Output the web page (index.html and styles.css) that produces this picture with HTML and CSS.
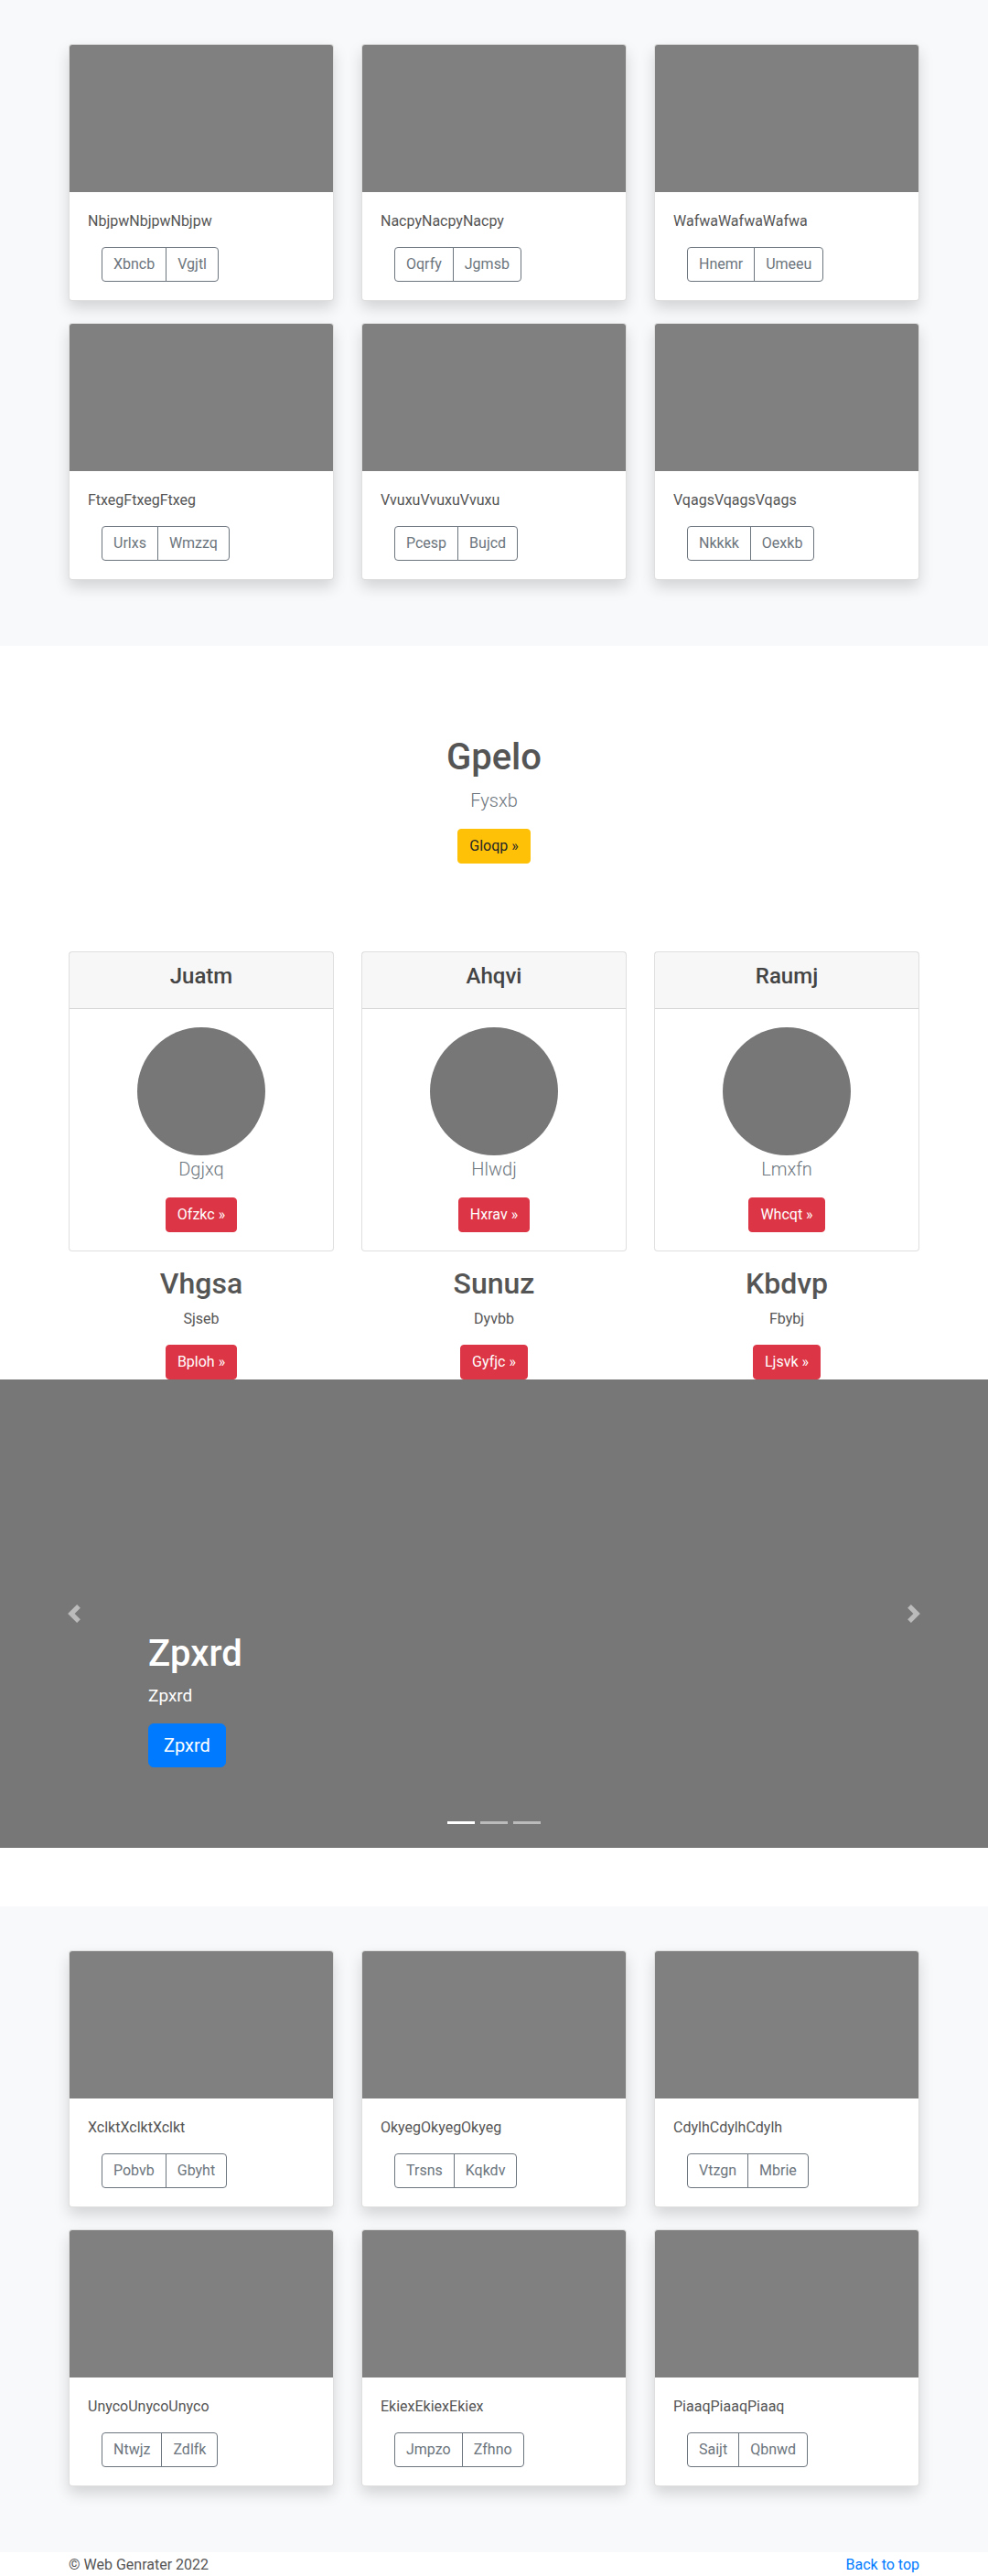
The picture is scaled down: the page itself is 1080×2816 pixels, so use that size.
FILE: index.html
```html
<!DOCTYPE html>
<html lang="en">
<head>
<meta charset="utf-8">
<title>Web Genrater</title>
<link rel="stylesheet" href="styles.css">
</head>
<body>
<section class="album">
  <div class="container grid3 album-grid">
    <div class="card"><div class="card-img"></div><div class="card-body"><p class="card-text">NbjpwNbjpwNbjpw</p><div class="btn-group"><a class="btn-o">Xbncb</a><a class="btn-o">Vgjtl</a></div></div></div>
    <div class="card"><div class="card-img"></div><div class="card-body"><p class="card-text">NacpyNacpyNacpy</p><div class="btn-group"><a class="btn-o">Oqrfy</a><a class="btn-o">Jgmsb</a></div></div></div>
    <div class="card"><div class="card-img"></div><div class="card-body"><p class="card-text">WafwaWafwaWafwa</p><div class="btn-group"><a class="btn-o">Hnemr</a><a class="btn-o">Umeeu</a></div></div></div>
    <div class="card"><div class="card-img"></div><div class="card-body"><p class="card-text">FtxegFtxegFtxeg</p><div class="btn-group"><a class="btn-o">Urlxs</a><a class="btn-o">Wmzzq</a></div></div></div>
    <div class="card"><div class="card-img"></div><div class="card-body"><p class="card-text">VvuxuVvuxuVvuxu</p><div class="btn-group"><a class="btn-o">Pcesp</a><a class="btn-o">Bujcd</a></div></div></div>
    <div class="card"><div class="card-img"></div><div class="card-body"><p class="card-text">VqagsVqagsVqags</p><div class="btn-group"><a class="btn-o">Nkkkk</a><a class="btn-o">Oexkb</a></div></div></div>
  </div>
</section>

<section class="jumbo">
  <h1 class="jumbo-title">Gpelo</h1>
  <p class="lead">Fysxb</p>
  <a class="btn btn-warning">Gloqp »</a>
</section>

<section class="container grid3">
  <div class="pcard">
    <div class="pcard-head"><h4 class="pcard-title">Juatm</h4></div>
    <div class="pcard-body"><div class="circle"></div><p class="lead pcard-lead">Dgjxq</p><a class="btn btn-danger">Ofzkc »</a></div>
  </div>
  <div class="pcard">
    <div class="pcard-head"><h4 class="pcard-title">Ahqvi</h4></div>
    <div class="pcard-body"><div class="circle"></div><p class="lead pcard-lead">Hlwdj</p><a class="btn btn-danger">Hxrav »</a></div>
  </div>
  <div class="pcard">
    <div class="pcard-head"><h4 class="pcard-title">Raumj</h4></div>
    <div class="pcard-body"><div class="circle"></div><p class="lead pcard-lead">Lmxfn</p><a class="btn btn-danger">Whcqt »</a></div>
  </div>
</section>

<section class="container grid3 features">
  <div class="feature"><h2 class="feature-title">Vhgsa</h2><p class="feature-text">Sjseb</p><a class="btn btn-danger">Bploh »</a></div>
  <div class="feature"><h2 class="feature-title">Sunuz</h2><p class="feature-text">Dyvbb</p><a class="btn btn-danger">Gyfjc »</a></div>
  <div class="feature"><h2 class="feature-title">Kbdvp</h2><p class="feature-text">Fbybj</p><a class="btn btn-danger">Ljsvk »</a></div>
</section>

<section class="carousel">
  <div class="carousel-caption">
    <h1 class="caption-title">Zpxrd</h1>
    <p class="caption-text">Zpxrd</p>
    <p class="caption-action"><a class="btn btn-lg btn-primary">Zpxrd</a></p>
  </div>
  <a class="ctrl ctrl-prev"><svg width="20" height="20" viewBox="0 0 8 8"><path fill="#fff" d="M5.25 0l-4 4 4 4 1.5-1.5L4.25 4l2.5-2.5L5.25 0z"/></svg></a>
  <a class="ctrl ctrl-next"><svg width="20" height="20" viewBox="0 0 8 8"><path fill="#fff" d="M2.75 0l-1.5 1.5L3.75 4l-2.5 2.5L2.75 8l4-4-4-4z"/></svg></a>
  <ol class="indicators"><li class="active"></li><li></li><li></li></ol>
</section>

<section class="album">
  <div class="container grid3 album-grid">
    <div class="card"><div class="card-img"></div><div class="card-body"><p class="card-text">XclktXclktXclkt</p><div class="btn-group"><a class="btn-o">Pobvb</a><a class="btn-o">Gbyht</a></div></div></div>
    <div class="card"><div class="card-img"></div><div class="card-body"><p class="card-text">OkyegOkyegOkyeg</p><div class="btn-group"><a class="btn-o">Trsns</a><a class="btn-o">Kqkdv</a></div></div></div>
    <div class="card"><div class="card-img"></div><div class="card-body"><p class="card-text">CdylhCdylhCdylh</p><div class="btn-group"><a class="btn-o">Vtzgn</a><a class="btn-o">Mbrie</a></div></div></div>
    <div class="card"><div class="card-img"></div><div class="card-body"><p class="card-text">UnycoUnycoUnyco</p><div class="btn-group"><a class="btn-o">Ntwjz</a><a class="btn-o">Zdlfk</a></div></div></div>
    <div class="card"><div class="card-img"></div><div class="card-body"><p class="card-text">EkiexEkiexEkiex</p><div class="btn-group"><a class="btn-o">Jmpzo</a><a class="btn-o">Zfhno</a></div></div></div>
    <div class="card"><div class="card-img"></div><div class="card-body"><p class="card-text">PiaaqPiaaqPiaaq</p><div class="btn-group"><a class="btn-o">Saijt</a><a class="btn-o">Qbnwd</a></div></div></div>
  </div>
</section>

<footer class="footer">
  <div class="container footer-row">
    <p class="footer-copy">© Web Genrater 2022</p>
    <a class="footer-link" href="#">Back to top</a>
  </div>
</footer>
</body>
</html>
```

FILE: styles.css
```css
* { box-sizing: border-box; }
html, body { margin: 0; padding: 0; }
body {
  font-family: Roboto, "Liberation Sans", Arial, sans-serif;
  font-size: 16px;
  line-height: 1.5;
  color: #555;
  background: #fff;
}
a { text-decoration: none; }

.container { width: 930px; margin: 0 auto; }
.grid3 { display: grid; grid-template-columns: repeat(3, 290px); column-gap: 30px; }

/* album sections */
.album { background: #f8f9fa; padding: 48px 0 72px; }
.album-grid { row-gap: 24px; }
.card {
  background: #fff;
  border: 1px solid rgba(0,0,0,.125);
  border-radius: 4px;
  box-shadow: 0 8px 16px rgba(0,0,0,.15);
  overflow: hidden;
}
.card-img { height: 161px; background: #808080; }
.card-body { padding: 20px; }
.card-text { margin: 0 0 16px; }
.btn-group { display: inline-flex; margin-left: 15px; }
.btn-o {
  display: inline-block;
  color: #6c757d;
  border: 1px solid #6c757d;
  padding: 6px 12px;
  line-height: 24px;
  font-size: 16px;
}
.btn-o:first-child { border-radius: 4px 0 0 4px; }
.btn-o + .btn-o { border-radius: 0 4px 4px 0; margin-left: -1px; }

/* buttons */
.btn {
  display: inline-block;
  font-size: 16px;
  line-height: 24px;
  padding: 6px 12px;
  border: 1px solid transparent;
  border-radius: 4px;
}
.btn-warning { background: #ffc107; border-color: #ffc107; color: #212529; }
.btn-danger { background: #dc3545; border-color: #dc3545; color: #fff; }
.btn-primary { background: #007bff; border-color: #007bff; color: #fff; }
.btn-lg { font-size: 20px; line-height: 30px; padding: 8px 16px; border-radius: 6px; }

/* jumbotron */
.jumbo { text-align: center; padding: 98px 0 96px; }
.jumbo-title { font-size: 40px; font-weight: 500; line-height: 1.2; margin: 0 0 8px; color: #555; }
.lead { font-size: 20px; font-weight: 300; line-height: 30px; margin: 0 0 16px; color: #6c757d; }

/* pricing cards */
.pcard { border: 1px solid rgba(0,0,0,.125); border-radius: 4px; text-align: center; background: #fff; }
.pcard-head { background: rgba(0,0,0,.03); border-bottom: 1px solid rgba(0,0,0,.125); padding: 12px 20px; }
.pcard-title { margin: 0 0 8px; font-size: 24px; font-weight: 500; line-height: 1.2; color: #444; }
.pcard-body { padding: 20px; }
.circle { width: 140px; height: 140px; border-radius: 50%; background: #777; margin: 0 auto; }
.pcard-lead { margin: 0 0 16px; }

/* features */
.features { margin-top: 16px; text-align: center; }
.feature-title { font-size: 32px; font-weight: 500; line-height: 1.2; margin: 0 0 8px; color: #555; }
.feature-text { margin: 0 0 16px; }

/* carousel */
.carousel { position: relative; height: 512px; background: #777; margin-bottom: 64px; }
.carousel-caption {
  position: absolute;
  left: 15%;
  right: 15%;
  bottom: 52px;
  padding-bottom: 20px;
  color: #fff;
  text-align: left;
  z-index: 2;
}
.caption-title { font-size: 40px; font-weight: 500; line-height: 1.2; margin: 0 0 8px; }
.caption-text { font-size: 19px; line-height: 1.5; margin: 0 0 16px; }
.caption-action { margin: 0 0 16px; }
.ctrl {
  position: absolute;
  top: 0;
  bottom: 0;
  width: 15%;
  display: flex;
  align-items: center;
  justify-content: center;
  opacity: .5;
}
.ctrl-prev { left: 0; }
.ctrl-next { right: 0; }
.indicators {
  position: absolute;
  left: 0;
  right: 0;
  bottom: 0;
  display: flex;
  justify-content: center;
  list-style: none;
  margin: 0 0 16px;
  padding: 0;
}
.indicators li { width: 30px; height: 3px; margin: 10px 3px; background: #fff; opacity: .5; }
.indicators li.active { opacity: 1; }

/* footer */
.footer { padding-top: 2px; }
.footer-row { display: flex; justify-content: space-between; }
.footer-copy { margin: 0; color: #555; }
.footer-link { color: #007bff; }
```
